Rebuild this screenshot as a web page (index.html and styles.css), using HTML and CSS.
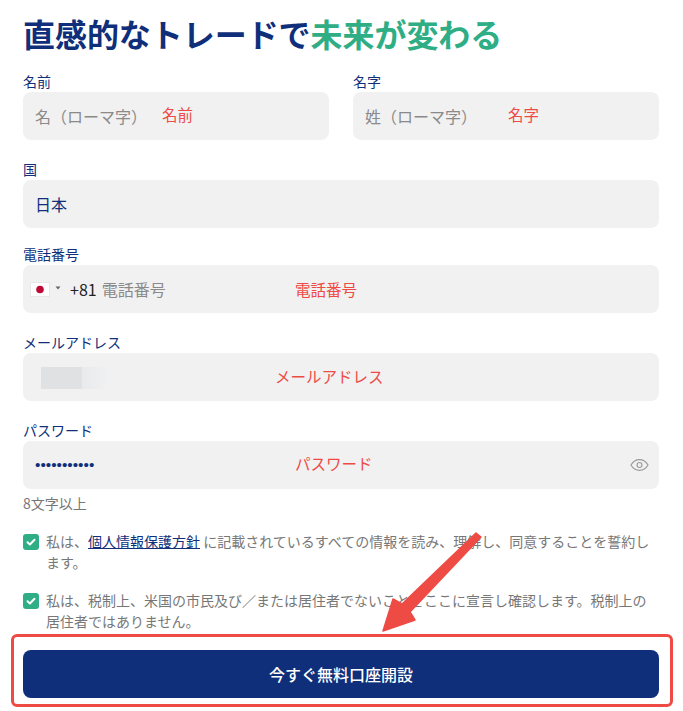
FILE: index.html
```html
<!DOCTYPE html>
<html lang="ja">
<head>
<meta charset="utf-8">
<title>口座開設</title>
<link rel="stylesheet" href="styles.css">
</head>
<body>
<main class="page">
  <h1 class="title">直感的なトレードで<span class="accent">未来が変わる</span></h1>
  <form class="form">
    <div class="row">
      <div class="field">
        <label class="label">名前</label>
        <div class="input"><span class="placeholder">名（ローマ字）</span><span class="note note-first">名前</span></div>
      </div>
      <div class="field">
        <label class="label">名字</label>
        <div class="input"><span class="placeholder">姓（ローマ字）</span><span class="note note-last">名字</span></div>
      </div>
    </div>
    <div class="field">
      <label class="label">国</label>
      <div class="input"><span class="value">日本</span></div>
    </div>
    <div class="field field-phone">
      <label class="label">電話番号</label>
      <div class="input input-phone">
        <svg class="flag" viewBox="0 0 18 13" width="18" height="13"><rect width="18" height="13" fill="#fff"/><circle cx="9" cy="6.500" r="3.800" fill="#bc0a35"/></svg>
        <svg class="caret" viewBox="0 0 6 4" width="6" height="4"><path d="M0.500 0.500h5L3 3.500z" fill="#666"/></svg>
        <span class="dial">+81</span>
        <span class="placeholder">電話番号</span>
        <span class="note note-phone">電話番号</span>
      </div>
    </div>
    <div class="field">
      <label class="label">メールアドレス</label>
      <div class="input">
        <span class="blur"></span>
        <span class="note note-mail">メールアドレス</span>
      </div>
    </div>
    <div class="field">
      <label class="label">パスワード</label>
      <div class="input input-password">
        <span class="dots">•••••••••••</span>
        <span class="note note-pass">パスワード</span>
        <svg class="eye" viewBox="0 0 20 14" width="19" height="14" fill="none" stroke="#9a9a9a" stroke-width="1.200"><path d="M1 7c2.200-3.800 5.300-5.700 9-5.700s6.800 1.900 9 5.700c-2.200 3.800-5.300 5.700-9 5.700S3.200 10.800 1 7z"/><circle cx="10" cy="7" r="2.600"/></svg>
      </div>
      <p class="hint">8文字以上</p>
    </div>
    <div class="check check-first">
      <span class="box"><svg viewBox="0 0 16 16" width="16" height="16"><path d="M4.500 8.300l2.400 2.200 4.600-4.700" fill="none" stroke="#fff" stroke-width="2" stroke-linecap="round" stroke-linejoin="round"/></svg></span>
      <p class="check-text">私は、<a class="link" href="#">個人情報保護方針</a> に記載されているすべての情報を読み、理解し、同意することを誓約します。</p>
    </div>
    <div class="check check-second">
      <span class="box"><svg viewBox="0 0 16 16" width="16" height="16"><path d="M4.500 8.300l2.400 2.200 4.600-4.700" fill="none" stroke="#fff" stroke-width="2" stroke-linecap="round" stroke-linejoin="round"/></svg></span>
      <p class="check-text">私は、税制上、米国の市民及び／または居住者でないことをここに宣言し確認します。税制上の居住者ではありません。</p>
    </div>
    <div class="submit-wrap">
      <button class="submit" type="button">今すぐ無料口座開設</button>
    </div>
  </form>
</main>
<svg class="arrow" viewBox="0 0 683 711" width="683" height="711"><path d="M476 533 L481 537 L410 612 L415 620 L383 631 L393 599 L402 604Z" fill="#ee4b45" stroke="#ee4b45" stroke-width="1.500" stroke-linejoin="round"/></svg>
</body>
</html>
```

FILE: styles.css
```css
* { box-sizing: border-box; }
html, body { margin: 0; padding: 0; background: #fff; }
body {
  width: 683px;
  height: 711px;
  overflow: hidden;
  position: relative;
  font-family: "Noto Sans CJK JP", "Noto Sans", sans-serif;
  color: #0f2f7a;
}
.page { padding: 13px 24px 0 23px; }
.title {
  margin: 0 0 18px;
  font-size: 32px;
  line-height: 41px;
  font-weight: 700;
  color: #0f2f7a;
  white-space: nowrap;
  letter-spacing: -0.050px;
}
.accent { color: #2fae85; }
.form { display: flex; flex-direction: column; gap: 20px; }
.row { display: grid; grid-template-columns: 306px 306px; gap: 24px; }
.field { display: flex; flex-direction: column; }
.field-phone { margin-top: -3px; }
.label {
  height: 20px;
  font-size: 14px;
  line-height: 19px;
  color: #0f2f7a;
}
.input {
  position: relative;
  display: flex;
  align-items: center;
  height: 48px;
  padding: 0 12px;
  background: #f1f1f2;
  border-radius: 8px;
  font-size: 16px;
}
.placeholder { color: #8a8a8a; }
.value { color: #0f2f7a; }
.note {
  position: absolute;
  top: 50%;
  transform: translateY(-50%);
  margin-top: -2px;
  color: #ee4b45;
  font-size: 15.500px;
  white-space: nowrap;
}
.note-first { left: 139px; }
.note-last { left: 155px; }
.note-phone { left: 272px; margin-top: 0; }
.note-mail { left: 252px; margin-top: -1px; }
.note-pass { left: 272px; margin-top: -2px; }
.input-phone { padding-left: 8px; }
.flag { box-shadow: 0 0 0 0.500px #ddd; }
.caret { margin-left: 6px; margin-top: -2px; }
.dial { margin-left: 9px; margin-right: 5px; color: #222; font-size: 16px; }
.blur {
  width: 67px;
  height: 22px;
  margin-left: 6px;
  margin-top: 1px;
  background: linear-gradient(90deg, #dfe1e3 0, #dfe1e3 60%, #e9eaeb 62%, #ecedee 80%, #f1f1f2 100%);
}
.input-password { justify-content: space-between; }
.dots { font-family: "Liberation Sans", sans-serif; font-size: 15.400px; color: #0f2f7a; }
.eye { margin-right: -2px; }
.hint {
  margin: 4px 0 1px;
  font-size: 14px;
  line-height: 20px;
  color: #777;
}
.check { display: flex; gap: 7px; }
.check-first { margin-top: -3px; }
.check-second { margin-top: -3px; }
.box {
  flex: none;
  width: 16px;
  height: 16px;
  margin-top: 3px;
  border-radius: 3px;
  background: #2fae85;
}
.box svg { display: block; }
.check-text {
  margin: 0;
  font-size: 14px;
  line-height: 21px;
  color: #777;
}
.link { color: #0f2f7a; text-decoration: underline; }
.submit-wrap {
  margin: -18px -14px 0 -12px;
  border: 3px solid #ee4b45;
  border-radius: 6px;
  padding: 13px 11px 6px 9px;
}
.submit {
  display: block;
  width: 636px;
  height: 48px;
  border: 0;
  border-radius: 8px;
  background: #0f2f7a;
  color: #fff;
  font-family: inherit;
  font-size: 16px;
  font-weight: 500;
}
.arrow { position: absolute; left: 0; top: 0; pointer-events: none; }
```
